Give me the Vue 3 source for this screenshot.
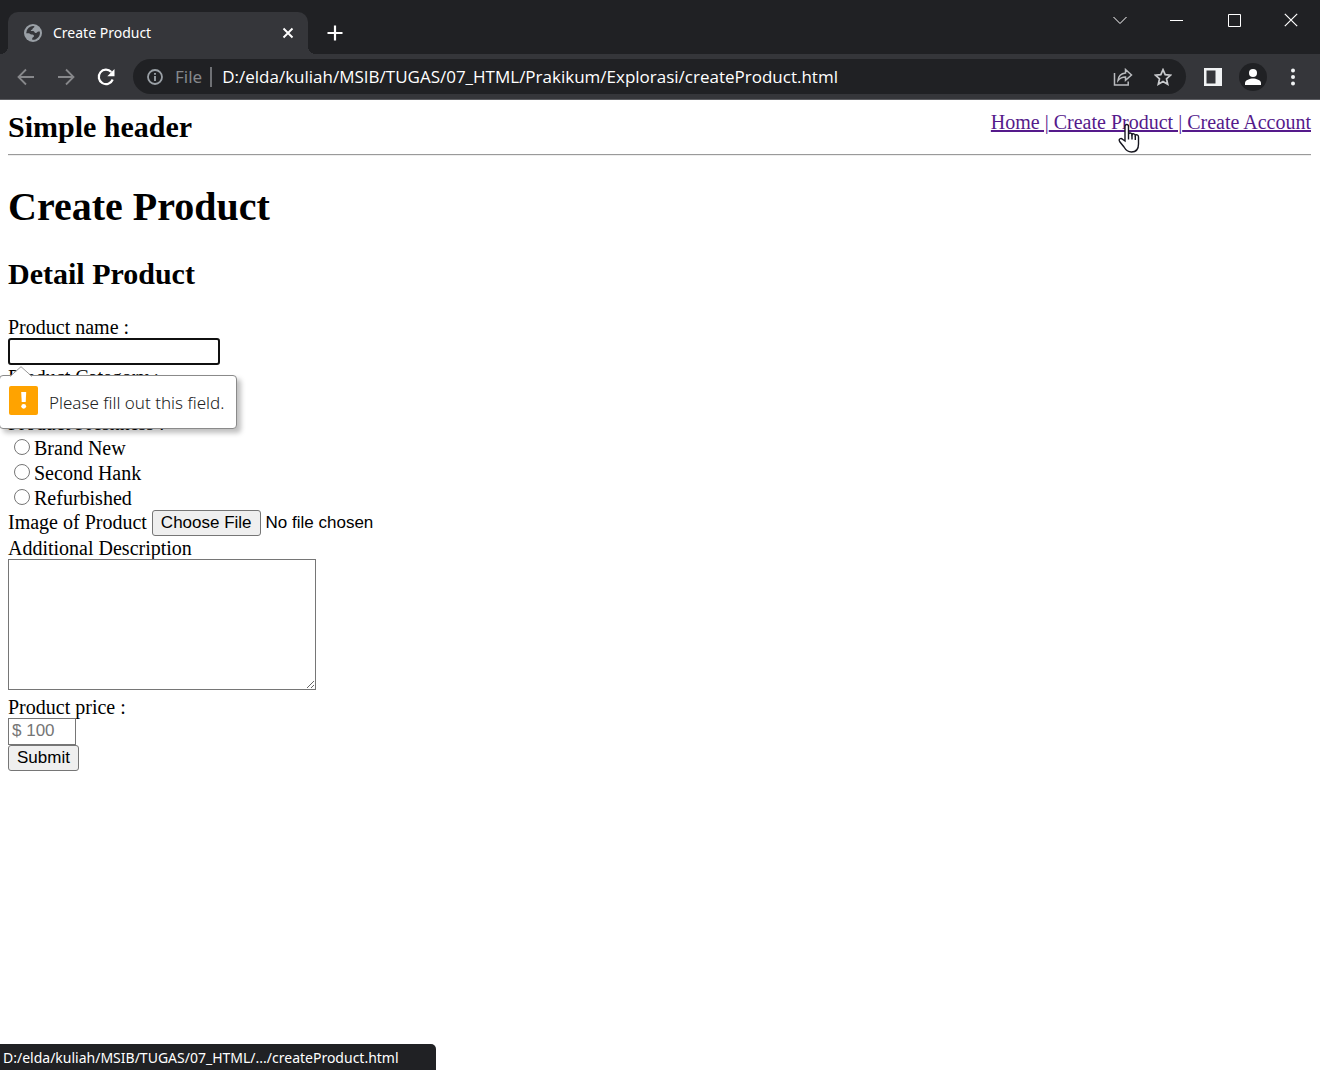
<script setup>
import { ref } from 'vue'

const name = ref('')
const category = ref('')
const condition = ref('')
const description = ref('')
const price = ref('')
const address = ref('D:/elda/kuliah/MSIB/TUGAS/07_HTML/Prakikum/Explorasi/createProduct.html')
const conditions = ['Brand New', 'Second Hank', 'Refurbished']
</script>

<template>
  <div class="browser">
    <header class="chrome">
      <div class="tab-strip">
        <div class="tab">
          <svg class="globe" viewBox="0 0 18 18" width="18" height="18">
            <circle cx="9" cy="9" r="9" fill="#9aa0a6" />
            <path d="M10.500 2.200C10.300 4 8.800 3.600 8.600 4.800c-.2 1.100-1.600 1-1.900 2.200H9c1.500 0 1.400 1.900 2.700 2 1.500.1 1.400-1.600 2.800-1.600h1.300a7 7 0 0 1-7.600 8.400v-1.200c0-1 1.900-1.200 1.800-2.500-.1-1.400-1.300-1.600-2.600-1.600-1.200 0-1.300-1.300-2.500-1.300H2.200A7 7 0 0 1 10.500 2.200z" fill="#35363a" />
          </svg>
          <span class="tab-title">Create Product</span>
          <button class="icon-button close-tab" aria-label="Close tab">
            <svg viewBox="0 0 12 12" width="12" height="12"><path d="M1.500 1.500l9 9M10.500 1.500l-9 9" stroke="#fff" stroke-width="1.900" /></svg>
          </button>
        </div>
        <button class="icon-button new-tab" aria-label="New tab">
          <svg viewBox="0 0 16 16" width="16" height="16"><path d="M8 .5v15M.5 8h15" stroke="#fff" stroke-width="2.200" /></svg>
        </button>
        <div class="window-controls">
          <button class="icon-button" aria-label="Search tabs">
            <svg viewBox="0 0 14 14" width="14" height="14"><path d="M.5 4l6.500 6.500L13.500 4" fill="none" stroke="#fff" /></svg>
          </button>
          <button class="icon-button" aria-label="Minimize">
            <svg viewBox="0 0 14 14" width="14" height="14"><path d="M0 7.500h13" stroke="#fff" /></svg>
          </button>
          <button class="icon-button" aria-label="Maximize">
            <svg viewBox="0 0 14 14" width="14" height="14"><path d="M1.500 1.500h12v12h-12z" fill="none" stroke="#fff" /></svg>
          </button>
          <button class="icon-button" aria-label="Close window">
            <svg viewBox="0 0 14 14" width="14" height="14"><path d="M.8.8l12.400 12.400M13.200.8L.8 13.200" stroke="#fff" stroke-width="1.200" /></svg>
          </button>
        </div>
      </div>

      <div class="toolbar">
        <button class="icon-button tool" aria-label="Back">
          <svg viewBox="0 0 18 18" width="18" height="18"><path d="M17 9H2M9 1.500L1.500 9 9 16.500" fill="none" stroke="#87888b" stroke-width="1.800" /></svg>
        </button>
        <button class="icon-button tool" aria-label="Forward">
          <svg viewBox="0 0 18 18" width="18" height="18"><path d="M1 9h15M9 1.500L16.500 9 9 16.500" fill="none" stroke="#87888b" stroke-width="1.800" /></svg>
        </button>
        <button class="icon-button tool" aria-label="Reload">
          <svg viewBox="0 0 18 18" width="18" height="18"><path d="M15.700 11.500A7.200 7.200 0 1 1 14.300 4" fill="none" stroke="#fff" stroke-width="2.200" /><path d="M17.500 1v7.200h-7.200z" fill="#fff" /></svg>
        </button>
        <div class="omnibox">
          <svg class="info" viewBox="0 0 16 16" width="16" height="16"><circle cx="8" cy="8" r="7" fill="none" stroke="#9aa0a6" stroke-width="1.800" /><path d="M8 7v5M8 4v1.800" stroke="#9aa0a6" stroke-width="1.900" /></svg>
          <label class="scheme" for="address">File</label>
          <input id="address" v-model="address" class="address" type="text" spellcheck="false" />
          <button class="icon-button tool" aria-label="Share">
            <svg viewBox="0 0 20 18" width="20" height="18" fill="none" stroke="#b9bbbe" stroke-width="1.500"><path d="M1.500 5v12h13.700v-3.500" /><path d="M5 12.500c.4-4.500 3-7 7.500-7.500V1.500l6 5.500-6 5.300V9C9 9 7 10 5 12.500z" /></svg>
          </button>
          <button class="icon-button tool" aria-label="Bookmark">
            <svg viewBox="0 0 18 18" width="18" height="18"><path d="M9 1.700l2.200 5 5.400.5-4.100 3.600 1.200 5.400L9 13.400l-4.700 2.800 1.200-5.400-4.100-3.600 5.400-.5z" fill="none" stroke="#c8cacd" stroke-width="1.700" /></svg>
          </button>
        </div>
        <div class="actions">
          <button class="icon-button tool" aria-label="Side panel">
            <svg viewBox="0 0 18 18" width="18" height="18"><path d="M0 0h18v18H0zM2.500 2.500v13h9v-13z" fill="#f1f3f4" fill-rule="evenodd" /></svg>
          </button>
          <button class="icon-button tool" aria-label="Profile">
            <svg viewBox="0 0 28 28" width="28" height="28"><circle cx="14" cy="14" r="14" fill="#202124" /><circle cx="14" cy="10" r="4" fill="#fff" /><path d="M6 22v-2c0-3 5-4.500 8-4.500s8 1.500 8 4.500v2z" fill="#fff" /></svg>
          </button>
          <button class="icon-button tool" aria-label="Menu">
            <svg viewBox="0 0 18 18" width="18" height="18" fill="#f1f3f4"><circle cx="9" cy="2.500" r="2" /><circle cx="9" cy="9" r="2" /><circle cx="9" cy="15.500" r="2" /></svg>
          </button>
        </div>
      </div>
    </header>

    <main class="page">
      <div class="site-header">
        <h2>Simple header</h2>
        <nav>
          <a href="#home">Home |</a><a href="#create-product"> Create Product |<svg class="pointer" viewBox="0 0 22 30" width="22" height="30"><path d="M7 18V3.500C7 .8 10.500.8 10.500 3.500V11c.5-1.500 3.200-1.200 3.500.6.700-1.300 3-1 3.300.8.800-1 3.200-.8 3.200 1.600v7c0 5-2.500 8-7 8-4 0-5.500-1.500-7.500-5L1.600 18.500C.3 16 3 14.500 4.500 16.200z" fill="#fff" stroke="#16161f" stroke-width="1.400" /><path d="M10.500 11v5.500M14 11.500v5M17.300 12.500v4.500" stroke="#16161f" stroke-width="1.400" /></svg></a><a href="#create-account"> Create Account</a>
        </nav>
      </div>
      <hr />
      <h1>Create Product</h1>
      <h2>Detail Product</h2>

      <form novalidate @submit.prevent>
        <label for="name">Product name :</label>
        <div class="name-field">
          <input id="name" v-model="name" class="name" type="text" required />
          <div class="bubble" role="alert">
            <svg class="bubble-arrow" viewBox="0 0 22 11" width="22" height="11"><path d="M0 11L11 .7 22 11z" fill="#fff" /><path d="M0 10.500L11 .7l11 9.800" fill="none" stroke="#9a9a9a" /></svg>
            <svg viewBox="0 0 29 29" width="29" height="29"><rect width="29" height="29" rx="2" fill="#ffa300" /><path d="M12.200 6h5l-.5 10h-4z" fill="#fff" /><circle cx="14.700" cy="20.300" r="2.400" fill="#fff" /></svg>
            <span>Please fill out this field.</span>
          </div>
        </div>
        <label for="category">Product Category :</label>
        <select id="category" v-model="category" class="category"><option value=""></option></select>
        <fieldset>
          <legend>Product Freshness :</legend>
          <label v-for="item in conditions" :key="item" class="choice">
            <input v-model="condition" type="radio" name="condition" :value="item" />{{ item }}
          </label>
        </fieldset>
        <div class="file-row">
          <label for="image">Image of Product</label>
          <input id="image" type="file" />
        </div>
        <label for="description">Additional Description</label>
        <textarea id="description" v-model="description"></textarea>
        <label for="price">Product price :</label>
        <input id="price" v-model="price" class="price" type="text" placeholder="$ 100" />
        <button class="submit" type="submit">Submit</button>
      </form>
    </main>

    <div class="status">D:/elda/kuliah/MSIB/TUGAS/07_HTML/.../createProduct.html</div>
  </div>
</template>

<style>
body {
  margin: 0;
  background: #fff;
}
</style>

<style scoped>
* {
  box-sizing: border-box;
}
.browser {
  min-height: 100vh;
  font-family: "Liberation Serif", serif;
  font-size: 20px;
  line-height: 23px;
  color: #000;
}
.chrome {
  background: #35363a;
  border-bottom: 1px solid #5d5e62;
  font-family: "Noto Sans", sans-serif;
}
.icon-button {
  display: flex;
  align-items: center;
  justify-content: center;
  padding: 0;
  border: 0;
  background: none;
}
.tab-strip {
  display: flex;
  height: 54px;
  padding-left: 8px;
  background: #202124;
}
.tab {
  position: relative;
  display: flex;
  align-items: center;
  width: 300px;
  height: 42px;
  margin-top: 12px;
  padding: 0 14px 1px 16px;
  border-radius: 10px 10px 0 0;
  background: #35363a;
}
.tab::before,
.tab::after {
  content: "";
  position: absolute;
  bottom: 0;
  width: 8px;
  height: 8px;
}
.tab::before {
  right: 100%;
  background: radial-gradient(circle at 0 0, #202124 8px, #35363a 8px);
}
.tab::after {
  left: 100%;
  background: radial-gradient(circle at 100% 0, #202124 8px, #35363a 8px);
}
.tab-title {
  flex: 1;
  margin-left: 11px;
  font-size: 14px;
  color: #fff;
}
.new-tab {
  width: 30px;
  margin: 12px 0 0 12px;
}
.window-controls {
  display: flex;
  gap: 43px;
  height: 39px;
  margin-left: auto;
  padding-right: 22px;
}
.toolbar {
  display: flex;
  align-items: center;
  height: 45px;
  padding: 0 13px 0 12px;
}
.toolbar > .tool {
  width: 28px;
  margin-right: 12px;
}
.omnibox {
  display: flex;
  align-items: center;
  flex: 1;
  height: 35px;
  margin-left: 1px;
  padding: 0 13px 0 14px;
  border-radius: 18px;
  background: #202124;
}
.scheme {
  margin: 0 10px 0 12px;
  padding-right: 8px;
  border-right: 2px solid #6f7175;
  font-size: 17px;
  line-height: 20px;
  color: #85888c;
}
.address {
  flex: 1;
  min-width: 0;
  padding: 0;
  border: 0;
  outline: 0;
  background: none;
  font-family: "Open Sans", sans-serif;
  font-size: 17px;
  color: #fff;
}
.omnibox .tool {
  width: 20px;
  margin-left: 20px;
}
.actions {
  display: flex;
  gap: 12px;
  margin-left: 13px;
}
.actions .tool {
  width: 28px;
}
.page {
  padding: 10px 9px 40px 8px;
}
.site-header {
  display: flex;
  justify-content: space-between;
}
h1,
h2 {
  margin: 0;
}
h1 {
  font-size: 40px;
  line-height: 46px;
}
h2 {
  font-size: 30px;
  line-height: 34px;
}
h1 + h2 {
  margin: 27px 0 24px;
}
nav {
  padding-top: 1px;
  white-space: pre;
}
nav a {
  position: relative;
  color: #551a8b;
}
.pointer {
  position: absolute;
  top: 12px;
  left: 69px;
}
hr {
  height: 2px;
  margin: 10px 0 28px;
  border: 0;
  border-top: 1px solid #9a9a9a;
  background: #eee;
}
form {
  display: flex;
  flex-direction: column;
  align-items: flex-start;
}
form > label {
  padding-top: 1px;
  line-height: 22px;
}
input,
select,
textarea,
.submit {
  font-family: "Liberation Sans", sans-serif;
  font-size: 17px;
}
.name-field {
  position: relative;
}
.name {
  display: block;
  width: 212px;
  height: 27px;
  border: 2px solid #101010;
  border-radius: 3px;
  outline: 0;
}
.bubble {
  position: absolute;
  top: 37px;
  left: -9px;
  display: flex;
  align-items: center;
  width: 238px;
  height: 54px;
  padding: 0 0 3px 9px;
  border: 1px solid #8a8a8a;
  border-radius: 4px;
  background: #fff;
  box-shadow: 4px 4px 5px rgba(0, 0, 0, 0.25);
  font-family: "Noto Sans", sans-serif;
  font-size: 17px;
  font-weight: 300;
  white-space: nowrap;
  color: #222;
}
.bubble span {
  margin: 3px 0 0 11px;
}
.bubble-arrow {
  position: absolute;
  bottom: 100%;
  left: 10px;
  margin-bottom: -1px;
}
.category {
  width: 120px;
  height: 24px;
}
fieldset {
  margin: 0;
  padding: 0;
  border: 0;
}
legend {
  padding: 0;
}
.choice {
  display: flex;
  align-items: center;
  padding-top: 2px;
  line-height: 23px;
}
.choice input {
  width: 16px;
  height: 16px;
  margin: 0 4px 4px 6px;
}
.file-row {
  display: flex;
  align-items: center;
  gap: 5px;
  height: 26px;
}
.file-row label {
  padding-bottom: 1px;
}
input[type="file"] {
  width: 260px;
}
input::file-selector-button {
  height: 26px;
  margin: 0 5px 0 0;
  padding: 0 8px;
  border: 1px solid #767676;
  border-radius: 3px;
  background: #efefef;
  font-family: "Liberation Sans", sans-serif;
  font-size: 17px;
}
textarea {
  width: 308px;
  height: 131px;
  margin-bottom: 5px;
  border: 1px solid #767676;
}
.price {
  width: 68px;
  height: 27px;
  padding: 0 3px 1px;
  border: 1px solid #767676;
}
.price::placeholder {
  color: #757575;
}
.submit {
  height: 26px;
  padding: 0 8px;
  border: 1px solid #767676;
  border-radius: 3px;
  background: #efefef;
  color: #000;
}
.status {
  position: fixed;
  bottom: 0;
  left: 0;
  width: 436px;
  height: 26px;
  padding-left: 3px;
  border-radius: 0 5px 0 0;
  background: #202124;
  font-family: "Noto Sans", sans-serif;
  font-size: 14px;
  line-height: 27px;
  color: #fff;
}
</style>
